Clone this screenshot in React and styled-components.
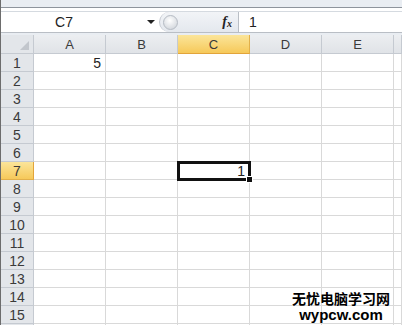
import styled, { createGlobalStyle } from 'styled-components';

const GlobalStyle = createGlobalStyle`
  html, body {
    margin: 0;
    padding: 0;
    background: #ffffff;
    overflow: hidden;
  }
  body {
    font-family: "Liberation Sans", Arial, sans-serif;
  }
`;

const COLS = ['A', 'B', 'C', 'D', 'E', ''];
const ROWS = Array.from({ length: 16 }, (_, i) => i + 1);
const VALUES = { '1-A': '5', '7-C': '1' };
const ACTIVE = { row: 7, col: 'C' };

export default function App() {
  return (
    <>
      <GlobalStyle />
      <Window>
        <TopStrip />
        <FormulaBar>
          <NameBox>
            <NameText>C7</NameText>
            <DropArrow />
          </NameBox>
          <Middle>
            <Knob />
            <Fx>f<sub>x</sub></Fx>
          </Middle>
          <Input>1</Input>
        </FormulaBar>
        <Gap />
        <Grid>
          <Corner>
            <CornerMark />
          </Corner>
          {COLS.map((c, i) => (
            <ColHead key={`h${i}`} active={c === ACTIVE.col}>{c}</ColHead>
          ))}
          {ROWS.map((r) => (
            <Row key={r} r={r} />
          ))}
        </Grid>
        <Watermark>
          <WmCn>无忧电脑学习网</WmCn>
          <WmEn>wypcw.com</WmEn>
        </Watermark>
      </Window>
    </>
  );
}

function Row({ r }) {
  return (
    <>
      <RowHead active={r === ACTIVE.row}>{r <= 15 ? r : ''}</RowHead>
      {COLS.map((c, i) => {
        const sel = r === ACTIVE.row && c === ACTIVE.col;
        return (
          <Cell key={`${r}-${i}`} selected={sel}>
            {VALUES[`${r}-${c}`]}
            {sel && <Handle />}
          </Cell>
        );
      })}
    </>
  );
}

const Window = styled.div`
  position: relative;
  width: 402px;
  height: 325px;
  overflow: hidden;
  background: #ffffff;
  border-left: 1px solid #6d6d6d;
  box-sizing: border-box;
`;
const TopStrip = styled.div`
  height: 7px;
  background: #e9edf2;
  border-bottom: 1px solid #8e949c;
`;
const FormulaBar = styled.div`
  display: flex;
  height: 20px;
  margin-top: 3px;
  border-top: 1px solid #d5dae0;
  border-bottom: 1px solid #b9bec5;
  background: #ffffff;
`;
const NameBox = styled.div`
  width: 158px;
  display: flex;
  align-items: center;
`;
const NameText = styled.div`
  flex: 1;
  text-align: center;
  font-size: 14px;
  color: #222;
  padding-right: 20px;
`;
const DropArrow = styled.div`
  width: 0;
  height: 0;
  border-left: 4px solid transparent;
  border-right: 4px solid transparent;
  border-top: 4px solid #222;
  margin-right: 4px;
`;
const Middle = styled.div`
  width: 78px;
  display: flex;
  align-items: center;
  justify-content: space-between;
  background: linear-gradient(#f2f4f7, #e4e8ee);
  border-right: 1px solid #b9bec5;
  border-radius: 10px 0 0 10px;
  border-left: 1px solid #c4c9d0;
`;
const Knob = styled.div`
  width: 13px;
  height: 13px;
  margin-left: 3px;
  border-radius: 50%;
  background: radial-gradient(circle at 45% 35%, #ffffff, #c9ced5);
  border: 1px solid #b5bbc3;
`;
const Fx = styled.div`
  font-family: "Liberation Serif", "Times New Roman", serif;
  font-style: italic;
  font-weight: bold;
  font-size: 14px;
  color: #222;
  margin-right: 6px;
  sub {
    font-size: 10px;
    vertical-align: -1px;
  }
`;
const Input = styled.div`
  flex: 1;
  font-size: 14px;
  color: #222;
  padding-left: 10px;
  line-height: 20px;
`;
const Gap = styled.div`
  height: 2px;
  background: #e9edf2;
`;
const Grid = styled.div`
  display: grid;
  grid-template-columns: 33px repeat(5, 72px) 1fr;
  grid-template-rows: 19px;
  grid-auto-rows: 18px;
`;
const headBase = `
  box-sizing: border-box;
  display: flex;
  align-items: center;
  justify-content: center;
  font-size: 13px;
  color: #3a3a3a;
`;
const Corner = styled.div`
  ${headBase}
  background: #e3e6ea;
  border-right: 1px solid #c5cad1;
  border-bottom: 1px solid #c5cad1;
  position: relative;
`;
const CornerMark = styled.div`
  position: absolute;
  right: 4px;
  bottom: 3px;
  width: 0;
  height: 0;
  border-left: 9px solid transparent;
  border-bottom: 9px solid #c2c6cc;
`;
const ColHead = styled.div`
  ${headBase}
  padding-top: 1px;
  background: ${({ active }) => (active ? 'linear-gradient(#fbe59a, #f6c95a)' : 'linear-gradient(#eceef1, #e0e3e7)')};
  border-right: 1px solid ${({ active }) => (active ? '#e2b04a' : '#c5cad1')};
  border-bottom: 1px solid ${({ active }) => (active ? '#e2a43a' : '#c5cad1')};
`;
const RowHead = styled.div`
  ${headBase}
  font-size: 14px;
  background: ${({ active }) => (active ? 'linear-gradient(#fbe59a, #f6c95a)' : '#e3e6ea')};
  border-right: 1px solid ${({ active }) => (active ? '#e2a43a' : '#c5cad1')};
  border-bottom: 1px solid ${({ active }) => (active ? '#e2b04a' : '#c5cad1')};
`;
const Cell = styled.div`
  box-sizing: border-box;
  position: relative;
  display: flex;
  align-items: center;
  justify-content: flex-end;
  padding-right: 4px;
  font-size: 14px;
  color: #222;
  border-right: 1px solid #d9d9d9;
  border-bottom: 1px solid #d9d9d9;
  ${({ selected }) => selected && `
    outline: 3px solid #111;
    outline-offset: -2px;
    z-index: 1;
  `}
`;
const Handle = styled.div`
  position: absolute;
  right: -4px;
  bottom: -4px;
  width: 5px;
  height: 5px;
  background: #111;
  border: 1px solid #fff;
`;
const Watermark = styled.div`
  position: absolute;
  right: 12px;
  bottom: 3px;
  display: flex;
  flex-direction: column;
  align-items: center;
  gap: 1px;
  z-index: 2;
`;
const WmCn = styled.div`
  font-family: "Noto Sans CJK SC", sans-serif;
  font-weight: bold;
  font-size: 14px;
  line-height: 16px;
  color: #000;
`;
const WmEn = styled.div`
  font-family: "Liberation Sans", Arial, sans-serif;
  font-weight: bold;
  font-size: 15px;
  line-height: 15px;
  color: #000;
`;
